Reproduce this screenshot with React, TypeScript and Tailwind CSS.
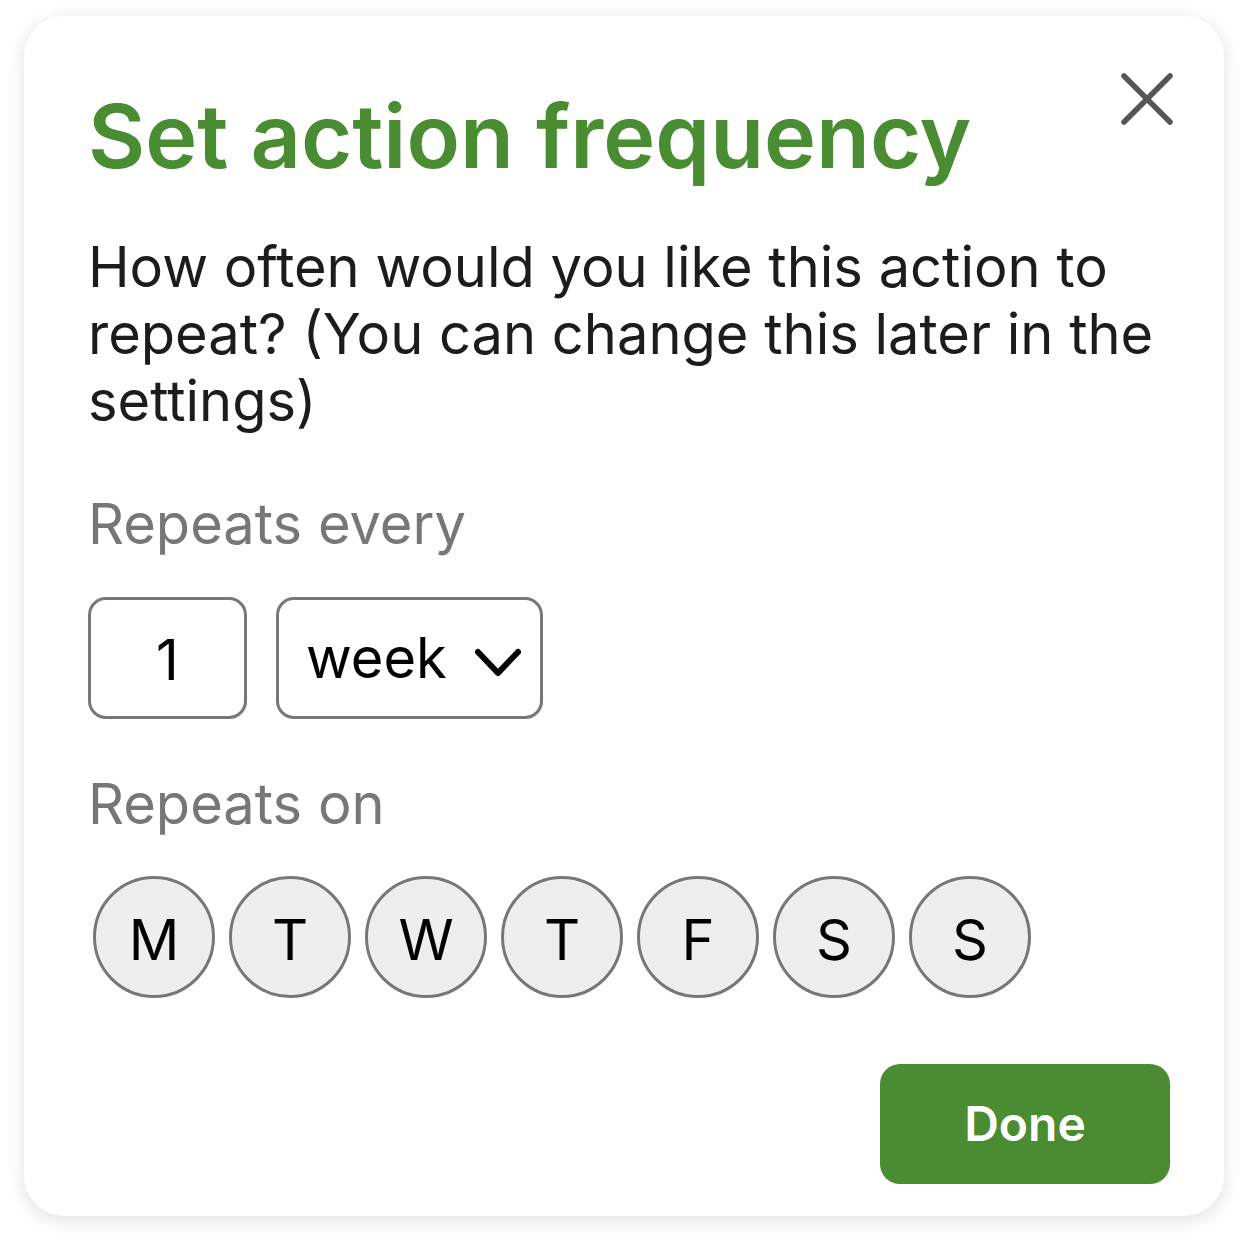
import { useState } from "react";

const DAYS = ["M", "T", "W", "T", "F", "S", "S"];

function CloseIcon() {
    return (
        <svg width="52" height="52" viewBox="0 0 52 52" fill="none" stroke="#555555" strokeWidth="5.5" strokeLinecap="round">
            <path d="M3 3 L49 49 M49 3 L3 49" />
        </svg>
    );
}

function Chevron() {
    return (
        <svg width="50" height="32" viewBox="0 0 50 32" fill="none" stroke="#000" strokeWidth="6" strokeLinecap="round" strokeLinejoin="round">
            <path d="M5 6 L25 27 L45 6" />
        </svg>
    );
}

export default function App() {
    const [count] = useState(1);

    return (
        <div className="min-h-screen bg-white px-[24px] pt-[16px] font-['Inter',sans-serif]">
            <div className="w-[1200px] h-[1200px] bg-white rounded-[40px] shadow-[0_4px_18px_rgba(0,0,0,0.13)] pl-[64px] pr-[54px] pt-[76px] pb-[32px] flex flex-col">

                {/* Header */}
                <div className="flex items-start justify-between">
                    <h1 className="text-[88px] leading-none font-semibold text-[#4a8c32]">
                        Set action frequency
                    </h1>
                    <button className="mt-[-19px] mr-[-3px]">
                        <CloseIcon />
                    </button>
                </div>

                <p className="mt-[54px] text-[56px] leading-[67px] text-[#1c1c1c]">
                    How often would you like this action to repeat? (You can change this later in the settings)
                </p>

                <div className="mt-[56px] text-[56px] leading-[67px] text-[#777777]">Repeats every</div>

                {/* Interval inputs */}
                <div className="mt-[39px] flex gap-[29px]">
                    <div className="w-[159px] h-[122px] border-[3px] border-[#777777] rounded-[18px] flex items-center justify-center pt-[4px] text-[56px] text-black">
                        {count}
                    </div>
                    <div className="w-[267px] h-[122px] border-[3px] border-[#777777] rounded-[18px] flex items-center pl-[27px] pr-[17px] justify-between text-[56px] text-black">
                        <span>week</span>
                        <span className="mt-[8px]">
                            <Chevron />
                        </span>
                    </div>
                </div>

                <div className="mt-[52px] text-[56px] leading-[67px] text-[#777777]">Repeats on</div>

                {/* Weekday picker */}
                <div className="mt-[38px] flex gap-[14px] pl-[5px]">
                    {DAYS.map((d, i) => (
                        <div
                            key={i}
                            className="w-[122px] h-[122px] rounded-full border-[3px] border-[#777777] bg-[#eeeeee] flex items-center justify-center pt-[6px] text-[56px] text-black"
                        >
                            {d}
                        </div>
                    ))}
                </div>

                <div className="mt-auto flex justify-end">
                    <button className="w-[290px] h-[120px] rounded-[20px] bg-[#4a8c32] text-white text-[48px] font-semibold">
                        Done
                    </button>
                </div>
            </div>
        </div>
    );
}
